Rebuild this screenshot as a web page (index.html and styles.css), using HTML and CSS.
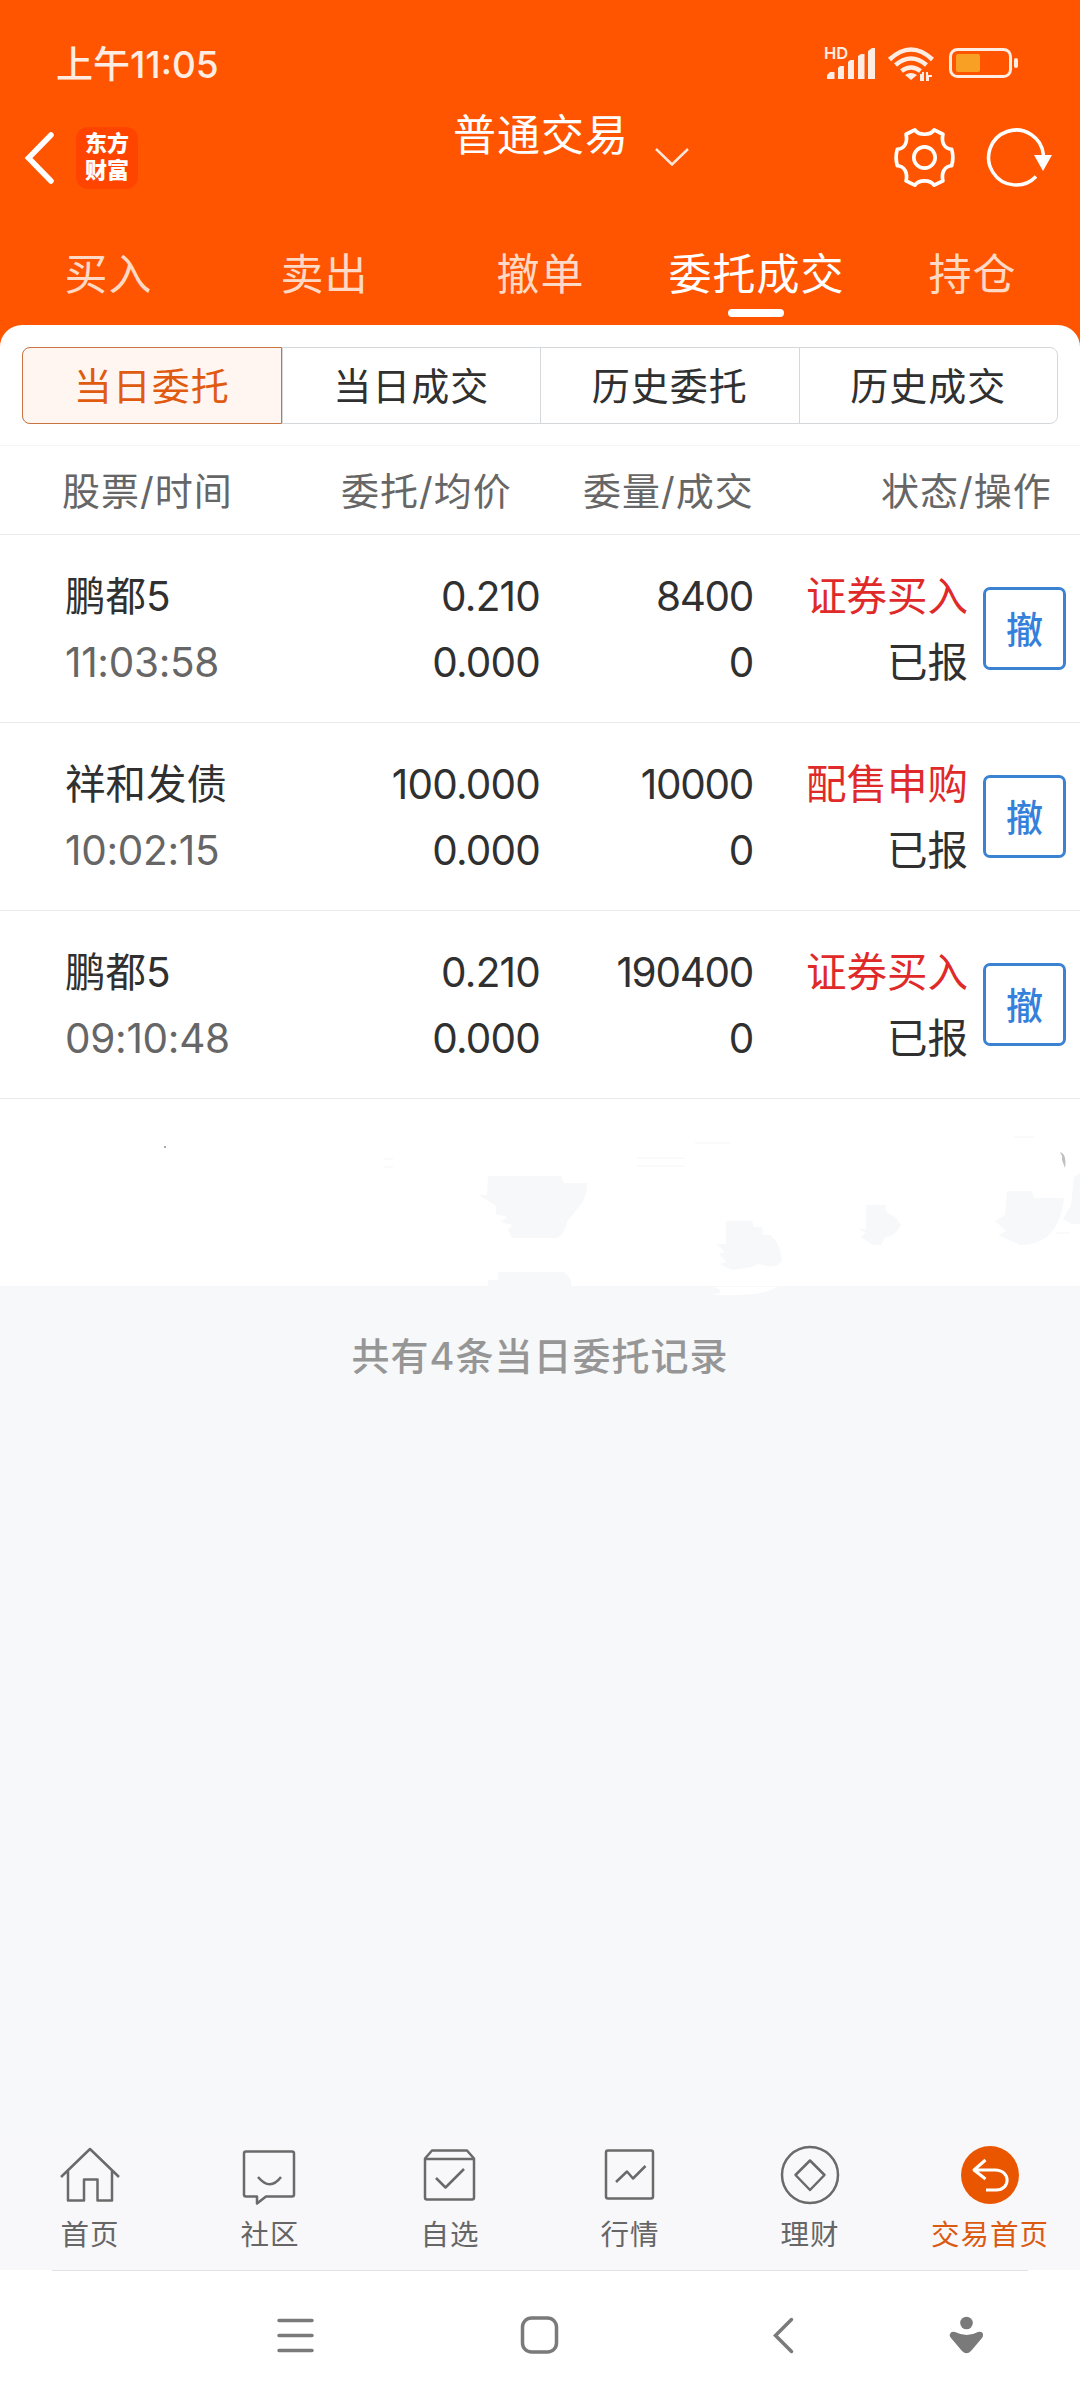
FILE: index.html
```html
<!DOCTYPE html>
<html lang="zh-CN">
<head>
  <meta charset="UTF-8" />
  <meta name="viewport" content="width=device-width, initial-scale=1.0"/>
  <title>普通交易 - 委托成交</title>
  <link rel="stylesheet" href="styles.css">
</head>
<body>

  <header class="top">
    <div class="status-bar">
      <span class="clock">上午<span class="digits">11:05</span></span>
      <svg class="status-icons" width="200" height="40" viewBox="820 44 200 40">
        <text class="hd" x="824" y="59">HD</text>
        <g fill="#ffede3">
          <path d="M827 79v-4l3-3h4.500v7zM838 79V68l2-2h4v13zM848 79V62l2-2h4v19zM858 79V56l3-2h3.500v25zM868 79V51l4-3h3v31z"/>
          <path d="M911 80l-6-5q6-4 12 0z"/>
          <path d="M920 81v-7h2v-2h2v9zM926 81v-9h2v3h4v2h-3v4z"/>
        </g>
        <g fill="none" stroke="#ffede3" stroke-width="4.500">
          <path d="M889.500 59.500q21.500-20 43 0"/>
          <path d="M895.500 65q15.500-13 31 0"/>
          <path d="M901.500 71q9.500-7 19 0"/>
        </g>
        <rect x="950.500" y="49.500" width="60" height="27" rx="7" fill="none" stroke="#ffede3" stroke-width="3"/>
        <rect x="956" y="54" width="24" height="18" rx="2" fill="#f8a024"/>
        <rect x="1014" y="58" width="4" height="10" rx="2" fill="#ffede3"/>
      </svg>
    </div>

    <div class="title-bar">
      <svg class="back" width="36" height="60" viewBox="0 0 36 60">
        <path d="M29 7L6.500 30 29 53" fill="none" stroke="#fff" stroke-width="5.500" stroke-linecap="round"/>
      </svg>
      <div class="logo"><span>东方</span><span>财富</span></div>
      <h1>普通交易</h1>
      <svg class="drop" width="36" height="20" viewBox="0 0 36 20">
        <path d="M2 1l16 15.500L34 1" fill="none" stroke="#ffe6d9" stroke-width="2.500"/>
      </svg>
      <svg class="gear" width="64" height="64" viewBox="-33.500 -32.500 66 66" fill="none" stroke="#fff" stroke-width="3.800" stroke-linejoin="round">
        <path d="M-10-28.500C-6-22.500 6-22.500 10-28.500L19-24C17-15 21-9 28-8.500Q30.500 0 28 8.500C21 9 17 15 19 24L10 28.500C6 22.500-6 22.500-10 28.500L-19 24C-17 15-21 9-28 8.500Q-30.500 0-28-8.500C-21-9-17-15-19-24Z"/>
        <circle r="11"/>
      </svg>
      <svg class="refresh" width="68" height="64" viewBox="-32 -32 68 64">
        <path d="M20 18.500A27.500 27.500 0 1 1 27.500-3" fill="none" stroke="#fff" stroke-width="3.500"/>
        <path d="M18-3h18l-9 16z" fill="#fff"/>
      </svg>
    </div>

    <nav class="tabs">
      <a>买入</a>
      <a>卖出</a>
      <a>撤单</a>
      <a class="active">委托成交</a>
      <a>持仓</a>
    </nav>
  </header>

  <main class="sheet">
    <div class="segments">
      <a class="active">当日委托</a>
      <a>当日成交</a>
      <a>历史委托</a>
      <a>历史成交</a>
    </div>

    <div class="list-head">
      <span>股票/时间</span>
      <span>委托/均价</span>
      <span>委量/成交</span>
      <span>状态/操作</span>
    </div>

    <div class="order">
      <div class="name">鹏都5<br><span class="time">11:03:58</span></div>
      <div class="num">0.210<br>0.000</div>
      <div class="num amount">8400<br>0</div>
      <div class="state"><span class="red">证券买入</span><br>已报</div>
      <button class="cancel">撤</button>
    </div>

    <div class="order">
      <div class="name">祥和发债<br><span class="time">10:02:15</span></div>
      <div class="num">100.000<br>0.000</div>
      <div class="num amount">10000<br>0</div>
      <div class="state"><span class="red">配售申购</span><br>已报</div>
      <button class="cancel">撤</button>
    </div>

    <div class="order">
      <div class="name">鹏都5<br><span class="time">09:10:48</span></div>
      <div class="num">0.210<br>0.000</div>
      <div class="num amount">190400<br>0</div>
      <div class="state"><span class="red">证券买入</span><br>已报</div>
      <button class="cancel">撤</button>
    </div>

    <!-- wiped row -->
    <div class="order-blank">
      <svg width="1080" height="200" viewBox="0 1098 1080 200">
        <g fill="#f6f8fa">
          <path d="M488 1175h73l3 7h23q0 14-6 21l-14 18q-4 16-12 16h-43l-4-8 4-5-11-3 6-5-11-3v-8l-17-11h8z"/>
          <path d="M498 1279h-10v7h84l-2-9-6-6h-66z"/>
          <path d="M726 1220h26l2 6h8l1 8h8q11 12 11 27-7 6-16 4-9-4-14 1l-20 3-12-6 7-2-8-8 6-2-8-8h9z"/>
          <path d="M866 1204h20v7l9 5 6 8q-6 12-16 12l-4 8h-8l-12-8 5-4-8-4h8z"/>
          <path d="M1007 1190h25l2 7h30q-2 24-16 38-14 10-28 9l-22-10 8-4-11-10 10-6z"/>
          <path d="M1080 1172l-6 4-3 28-8 14 8 5h9z"/>
        </g>
        <path d="M710 1286q12 0 10 6l-8 2h23q30 0 42-8z" fill="#fff"/>
        <path d="M1060 1151l2 4v4l3 8q2-14-5-16z" fill="#c0c0c0"/>
        <path d="M384 1158h9M384 1166h9M637 1157h48M637 1165h48M695 1142h35M1014 1136h20M1056 1232h14" stroke="#f6f6f6" fill="none"/>
        <rect x="164" y="1145" width="2" height="2" fill="#aaa"/>
      </svg>
    </div>
  </main>

  <p class="total">共有4条当日委托记录</p>

  <nav class="tab-bar">
    <a>
      <svg width="64" height="78" viewBox="0 0 64 78">
        <path d="M3 41L32 13l29 28M10 35v29.500h16V43.500h13.500v21H54V35"/>
      </svg>
      首页
    </a>
    <a>
      <svg width="64" height="78" viewBox="0 0 64 78">
        <path d="M8 15.500h46q2 0 2 2v41q0 2-2 2H28l-9 7v-7H8q-2 0-2-2v-41q0-2 2-2zM20 41q12 14.500 23 0"/>
      </svg>
      社区
    </a>
    <a>
      <svg width="64" height="78" viewBox="0 0 64 78">
        <path d="M14 14.500h35l7 8v39q0 2-2 2H9q-2 0-2-2v-39zM7 23h49M18 42l9.500 9.500L46 33"/>
      </svg>
      自选
    </a>
    <a>
      <svg width="64" height="78" viewBox="0 0 64 78">
        <rect x="8" y="14.500" width="47" height="48" rx="2"/>
        <path d="M18 46l11-10.500 6 7L47.500 30"/>
      </svg>
      行情
    </a>
    <a>
      <svg width="64" height="78" viewBox="0 0 64 78">
        <circle cx="32" cy="39" r="28"/>
        <path d="M32 24.500L46.500 39 32 54 17.500 39z"/>
      </svg>
      理财
    </a>
    <a class="active">
      <svg width="64" height="78" viewBox="0 0 64 78">
        <circle class="disc" cx="32" cy="39" r="29"/>
        <path class="arrow" d="M27.500 24L16 34l11.500 9M16 34h21c16 0 16 20 1 20H28"/>
      </svg>
      交易首页
    </a>
  </nav>

  <div class="system-nav">
    <svg width="1080" height="40" viewBox="0 2315 1080 40" fill="none" stroke="#7a7a7a" stroke-width="3.500" stroke-linecap="round">
      <path d="M279 2320.500h33M279 2335.500h33M279 2350.500h33"/>
      <rect x="522.500" y="2318" width="34" height="34" rx="9"/>
      <path d="M791.500 2319.500l-16 16 16 16"/>
      <g fill="#7a7a7a" stroke="none">
        <circle cx="966.500" cy="2323" r="6.300"/>
        <path d="M955 2332q12 6 23 0 5-1 5 3 0 2-1 3l-11 13q-4.500 4.500-9 0l-11-13q-2-2-1-4 1-3 5-2z"/>
      </g>
    </svg>
  </div>

</body>
</html>
```

FILE: styles.css
```css
* {
  margin: 0;
  padding: 0;
  box-sizing: border-box;
}

body {
  display: flex;
  flex-direction: column;
  width: 1080px;
  height: 2400px;
  overflow: hidden;
  font-family: Inter, 'Noto Sans CJK SC', sans-serif;
  background: #f7f8fa;
  color: #303030;
}

svg {
  display: block;
  flex: none;
}

/* header */
.top {
  height: 349px;
  flex: none;
  background: #ff5500;
  color: #fff;
}

.status-bar {
  display: flex;
  justify-content: space-between;
  align-items: center;
  height: 88px;
  padding: 40px 60px 0 56px;
}

.clock {
  margin-top: -5px;
  font-size: 37px;
  font-weight: 500;
  color: #ffede3;
}

.hd {
  font-size: 16.500px;
  font-weight: 600;
  fill: #ffede3;
}

.title-bar {
  display: flex;
  align-items: center;
  height: 140px;
  padding-left: 22px;
}

.logo {
  display: flex;
  flex-direction: column;
  justify-content: center;
  width: 62px;
  height: 62px;
  margin-left: 18px;
  padding-bottom: 2px;
  border-radius: 12px;
  background: #ff4400;
  font-size: 22px;
  font-weight: 900;
  line-height: 27px;
  text-align: center;
}

.title-bar h1 {
  margin: 0 0 46px 315px;
  font-size: 43px;
  font-weight: 400;
  line-height: 60px;
  letter-spacing: 1px;
}

.drop {
  margin-left: 25px;
}

.gear {
  margin-left: auto;
}

.refresh {
  margin: 0 28px;
}

.tabs {
  display: grid;
  grid-template-columns: repeat(5, 1fr);
}

.tabs a {
  position: relative;
  padding: 16px 0 0 1px;
  height: 97px;
  line-height: 60px;
  font-size: 43px;
  letter-spacing: 1px;
  text-align: center;
  color: #ffd9c5;
}

.tabs .active {
  color: #fff;
}

.tabs .active::after {
  content: '';
  position: absolute;
  left: 80px;
  bottom: 8px;
  width: 56px;
  height: 8px;
  border-radius: 4px;
  background: #fff;
}

/* order list */
.sheet {
  flex: none;
  height: 961px;
  margin-top: -24px;
  padding-top: 22px;
  border-radius: 22px 22px 0 0;
  background: #fff;
}

.segments {
  display: grid;
  grid-template-columns: repeat(4, 1fr);
  height: 77px;
  margin: 0 22px 21px;
  border: 1px solid #d5d8da;
  border-radius: 8px;
}

.segments a {
  height: 75px;
  border-left: 1px solid #d5d8da;
  font-size: 38px;
  letter-spacing: 1px;
  line-height: 77px;
  text-align: center;
}

.segments .active {
  height: 77px;
  margin: -1px 0 0 -1px;
  border: 1px solid #c87440;
  border-radius: 8px 0 0 8px;
  background: #fff6f2;
  color: #e05a10;
}

.list-head {
  display: grid;
  grid-template-columns: 279px 242px 298px 200px;
  height: 90px;
  padding-left: 62px;
  border-top: 1px solid #f5f5f5;
  border-bottom: 1px solid #ebebeb;
  font-size: 38px;
  letter-spacing: 1px;
  line-height: 91px;
  color: #666;
}

.order {
  display: grid;
  grid-template-columns: 240px 235px 213px 215px 84px;
  height: 188px;
  padding: 29px 0 0 65px;
  border-bottom: 1px solid #ebebeb;
  font-size: 40.500px;
  line-height: 66px;
}

.time {
  color: #666;
  letter-spacing: -0.3px;
}

.num {
  text-align: right;
  letter-spacing: -0.8px;
}

.amount {
  letter-spacing: -1.3px;
}

.state {
  text-align: right;
  white-space: nowrap;
}

.red {
  color: #e02a2a;
}

.cancel {
  width: 83px;
  height: 83px;
  margin: 23px 0 0 15px;
  padding-bottom: 2px;
  border: 3px solid #3c82d3;
  border-radius: 7px;
  background: #fff;
  font: 500 37px 'Noto Sans CJK SC', sans-serif;
  color: #3580db;
}

.order-blank {
  height: 188px;
}

.total {
  padding-top: 40px;
  font-size: 38px;
  font-weight: 500;
  line-height: 60px;
  letter-spacing: 1px;
  text-align: center;
  color: #969696;
}

/* bottom bars */
.tab-bar {
  display: grid;
  grid-template-columns: repeat(6, 1fr);
  height: 134px;
  margin-top: auto;
  background: #f8f8fa;
}

.tab-bar a {
  display: flex;
  flex-direction: column;
  align-items: center;
  font-size: 28.500px;
  line-height: 41px;
  letter-spacing: 1px;
  color: #666;
}

.tab-bar svg {
  fill: none;
  stroke: #6a6a6a;
  stroke-width: 2.500;
  stroke-linejoin: round;
}

.tab-bar .active {
  color: #db5a12;
}

.tab-bar .disc {
  fill: #ea5500;
  stroke: none;
}

.tab-bar .arrow {
  stroke: #fff;
  stroke-width: 3;
}

.system-nav {
  flex: none;
  height: 130px;
  padding-top: 45px;
  background: linear-gradient(#e2e2e4, #e2e2e4) 52px 0 / 976px 1px no-repeat #fff;
}
```
